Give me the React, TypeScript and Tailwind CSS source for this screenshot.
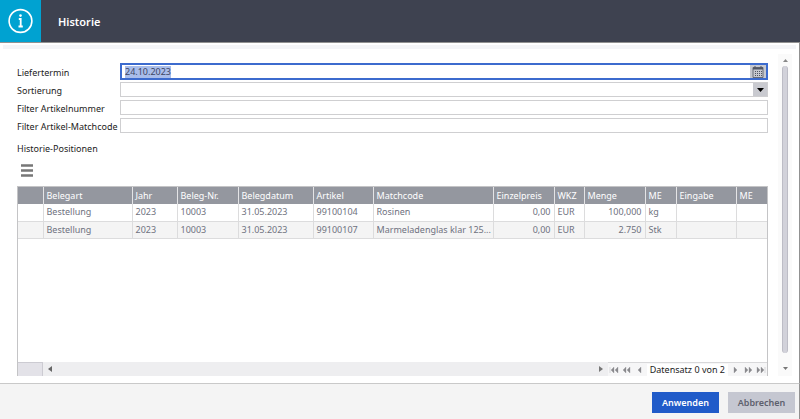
import { useEffect, useRef, useState } from 'react'

const columns = [
  { label: '', width: 'w-[25px]' },
  { label: 'Belegart', width: 'w-[89px]' },
  { label: 'Jahr', width: 'w-[45px]' },
  { label: 'Beleg-Nr.', width: 'w-[61px]' },
  { label: 'Belegdatum', width: 'w-[75px]' },
  { label: 'Artikel', width: 'w-[60px]' },
  { label: 'Matchcode', width: '' },
  { label: 'Einzelpreis', width: 'w-[61px]', right: true },
  { label: 'WKZ', width: 'w-[30px]' },
  { label: 'Menge', width: 'w-[61px]', right: true },
  { label: 'ME', width: 'w-[31px]' },
  { label: 'Eingabe', width: 'w-[60px]' },
  { label: 'ME', width: 'w-[31px]' },
]

const rows = [
  ['', 'Bestellung', '2023', '10003', '31.05.2023', '99100104', 'Rosinen', '0,00', 'EUR', '100,000', 'kg', '', ''],
  ['', 'Bestellung', '2023', '10003', '31.05.2023', '99100107', 'Marmeladenglas klar 125...', '0,00', 'EUR', '2.750', 'Stk', '', ''],
]

// record navigator glyphs, drawn in a 10x8 box
const nav = {
  first: 'M1 1V7M5 1L2 4L5 7ZM9 1L6 4L9 7Z',
  fastBack: 'M4 1L1 4L4 7ZM8 1L5 4L8 7Z',
  back: 'M6 1L3 4L6 7Z',
  next: 'M4 1L7 4L4 7Z',
  fastNext: 'M2 1L5 4L2 7ZM6 1L9 4L6 7Z',
  last: 'M1 1L4 4L1 7ZM5 1L8 4L5 7ZM9 1V7',
}

function NavButton({ label, path }: { label: string; path: string }) {
  return (
    <button aria-label={label} className="flex w-[13px] justify-center text-[#8a8a8e]">
      <svg width="10" height="8" viewBox="0 0 10 8" fill="currentColor" stroke="currentColor" strokeWidth="0.3"><path d={path} /></svg>
    </button>
  )
}

function CalendarIcon() {
  return (
    <svg width="12" height="12" viewBox="0 0 12 12" fill="none" stroke="#505562">
      <path d="M1 1.5H11V11.5H1Z" strokeWidth="0.8" />
      <path d="M1 2.5H11" strokeWidth="2" />
      <path d="M3 0V2M9 0V2" />
      <path d="M3 5.5H10M3 7.5H10M3 9.5H10" strokeWidth="1" strokeDasharray="1 1" />
    </svg>
  )
}

export default function App() {
  const dateRef = useRef<HTMLInputElement>(null)
  const [date, setDate] = useState('24.10.2023')
  const [artikel, setArtikel] = useState('')
  const [matchcode, setMatchcode] = useState('')

  useEffect(() => {
    dateRef.current?.focus()
    dateRef.current?.select()
  }, [])

  return (
    <div className="flex min-h-screen flex-col bg-white font-['Noto_Sans','Open_Sans',sans-serif] text-[9px] leading-3 text-[#222]">
      <header className="flex h-[42px] items-center bg-[#3e4250]">
        <div className="flex h-full w-[41px] items-center justify-center bg-[#00a2d1]">
          <svg width="26" height="26" viewBox="0 0 26 26" fill="none" stroke="white">
            <circle cx="12.5" cy="13" r="11.4" strokeWidth="1.6" />
            <path d="M10.8 11H12.7V18.3M10.5 18.5H14.8" strokeWidth="1.8" />
            <circle cx="12.5" cy="7.6" r="1.3" fill="white" stroke="none" />
          </svg>
        </div>
        <h1 className="pt-0.5 pl-[17px] text-[11px] font-semibold text-white">Historie</h1>
      </header>

      <div className="flex flex-1 flex-col border-t border-r border-[#919191]">
        <div className="mx-[3px] mt-0.5 h-1 bg-[#f4f5f8]" />
        <div className="flex flex-1 pr-[7px] pb-[7px] pl-[17px]">
          <main className="flex min-w-0 flex-1 flex-col pt-[15px]">
            <form className="flex flex-col gap-[3px]">
              <div className="-my-px flex h-[17px] items-center">
                <label htmlFor="termin" className="w-[103px] shrink-0 pt-0.5">Liefertermin</label>
                <div className="flex h-full flex-1 border-2 border-[#3c6bce]">
                  <input id="termin" ref={dateRef} value={date} onChange={e => setDate(e.target.value)}
                    className="min-w-0 flex-1 px-[3px] text-[#3d4663] outline-none selection:bg-[#a9bdea] selection:text-[#3d4663]" />
                  <button type="button" aria-label="Kalender" className="flex w-4 items-center justify-center bg-[#c6c8cf]"><CalendarIcon /></button>
                </div>
              </div>
              <div className="flex h-[15px] items-center">
                <label htmlFor="sort" className="w-[103px] shrink-0 pt-0.5">Sortierung</label>
                <div className="flex h-full flex-1 border border-[#cfcfd1]">
                  <select id="sort" className="min-w-0 flex-1 appearance-none px-1 outline-none"><option></option></select>
                  <span className="pointer-events-none flex w-[14px] items-center justify-center bg-[#c9cad0]">
                    <svg width="7" height="4" viewBox="0 0 7 4"><path d="M0 0H7L3.5 4Z" /></svg>
                  </span>
                </div>
              </div>
              <div className="flex h-[15px] items-center">
                <label htmlFor="artikel" className="w-[103px] shrink-0 pt-0.5">Filter Artikelnummer</label>
                <input id="artikel" value={artikel} onChange={e => setArtikel(e.target.value)} className="h-full min-w-0 flex-1 border border-[#cfcfd1] px-1 outline-none" />
              </div>
              <div className="flex h-[15px] items-center">
                <label htmlFor="matchcode" className="w-[103px] shrink-0 pt-0.5">Filter Artikel-Matchcode</label>
                <input id="matchcode" value={matchcode} onChange={e => setMatchcode(e.target.value)} className="h-full min-w-0 flex-1 border border-[#cfcfd1] px-1 outline-none" />
              </div>
            </form>

            <h2 className="mt-[10px]">Historie-Positionen</h2>
            <button aria-label="Menü" className="mt-[9px] mb-[9px] ml-1 w-3">
              <svg width="12" height="13" viewBox="0 0 12 13" fill="none" stroke="#777" strokeWidth="2.4"><path d="M0 1.5H12M0 6.5H12M0 11.5H12" /></svg>
            </button>

            <section className="flex flex-1 flex-col border-x border-t border-[#c4c4c6]">
              <table className="w-full table-fixed border-collapse text-[#6f7280]">
                <thead>
                  <tr className="h-[17px] bg-[#94979f] text-white">
                    {columns.map((c, i) => (
                      <th key={i} className={`${c.width} border-r border-[#e4e4e6] pl-[3px] text-left font-normal whitespace-nowrap last:border-r-0`}>{c.label}</th>
                    ))}
                  </tr>
                </thead>
                <tbody>
                  {rows.map((row, r) => (
                    <tr key={r} className="h-[17px] border-b border-[#dcdcdd] even:bg-[#f4f4f4]">
                      {row.map((cell, i) => (
                        <td key={i} className={`border-r border-[#dcdcdd] whitespace-nowrap last:border-r-0 ${columns[i].right ? 'pr-[3px] text-right' : 'pl-[3px]'}`}>{cell}</td>
                      ))}
                    </tr>
                  ))}
                </tbody>
              </table>
              <div className="mt-auto flex h-[14px] items-stretch">
                <span className="w-[25px] border-t border-r border-[#cccbd2] bg-[#e3e2e8]" />
                <div className="flex flex-1 items-center justify-between bg-[#eeeef0] px-0.5">
                  <button aria-label="Nach links"><svg width="10" height="8" viewBox="0 0 10 8" fill="#666"><path d="M7 1L3 4L7 7Z" /></svg></button>
                  <button aria-label="Nach rechts"><svg width="10" height="8" viewBox="0 0 10 8" fill="#777"><path d="M3 1L7 4L3 7Z" /></svg></button>
                </div>
                <nav className="flex items-center border-t border-[#d8d8da] bg-[#f6f6f7] pt-px">
                  <NavButton label="Erster" path={nav.first} />
                  <NavButton label="Seite zurück" path={nav.fastBack} />
                  <NavButton label="Zurück" path={nav.back} />
                  <span className="bg-white px-[3px]">Datensatz 0 von 2</span>
                  <NavButton label="Weiter" path={nav.next} />
                  <NavButton label="Seite vor" path={nav.fastNext} />
                  <NavButton label="Letzter" path={nav.last} />
                </nav>
              </div>
            </section>
          </main>

          <div className="mt-[5px] ml-[10px] flex w-[14px] flex-col items-center bg-[#fafafa]">
            <button aria-label="Nach oben" className="flex h-3 items-center"><svg width="5" height="3" viewBox="0 0 5 3" fill="#888"><path d="M0 3H5L2.5 0Z" /></svg></button>
            <div className="w-1.5 flex-1 rounded-full border-x border-[#bdbdc6] bg-[#d2d2da]" />
            <button aria-label="Nach unten" className="mt-[7px] flex h-4 items-center"><svg width="5" height="3" viewBox="0 0 5 3" fill="#777"><path d="M0 0H5L2.5 3Z" /></svg></button>
          </div>
        </div>
      </div>

      <footer className="flex h-9 items-center justify-end gap-[9px] border-t border-r border-t-[#c9c9c9] border-r-[#919191] bg-[#f4f4f4] pt-1.5 pr-1 pb-1">
        <button className="h-[21px] w-[67px] bg-[#205bc9] pt-px font-semibold text-white">Anwenden</button>
        <button className="h-[21px] w-[67px] bg-[#c5c7d1] pt-px font-semibold text-[#5d606d]">Abbrechen</button>
      </footer>
    </div>
  )
}
